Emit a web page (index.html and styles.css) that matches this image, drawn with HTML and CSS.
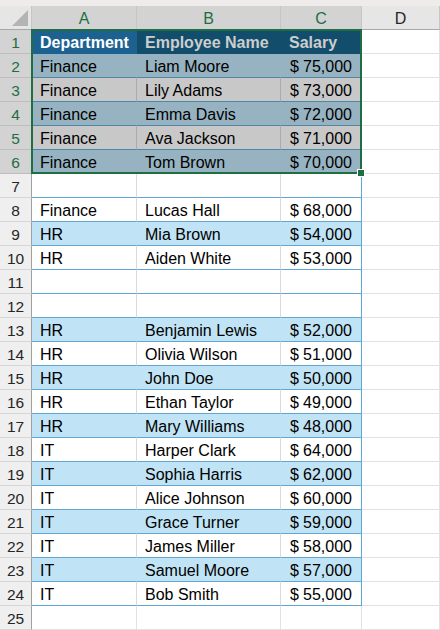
FILE: index.html
```html
<!DOCTYPE html>
<html>
<head>
<meta charset="utf-8">
<link rel="stylesheet" href="styles.css">
</head>
<body>
<div class="topbar"></div>
<div class="sheet">
  <div class="row colhead">
    <div class="corner"><span class="tri"></span></div>
    <div class="on">A</div>
    <div class="on">B</div>
    <div class="on">C</div>
    <div>D</div>
  </div>

  <div class="row s-head">
    <div class="rh on">1</div>
    <div class="h act">Department</div>
    <div class="h">Employee Name</div>
    <div class="h">Salary</div>
    <div class="d"></div>
  </div>
  <div class="row s-blue">
    <div class="rh on">2</div>
    <div class="t">Finance</div><div class="t">Liam Moore</div><div class="t num"><span>$</span><span>75,000</span></div><div class="d"></div>
  </div>
  <div class="row s-gray">
    <div class="rh on">3</div>
    <div class="t">Finance</div><div class="t">Lily Adams</div><div class="t num"><span>$</span><span>73,000</span></div><div class="d"></div>
  </div>
  <div class="row s-blue">
    <div class="rh on">4</div>
    <div class="t">Finance</div><div class="t">Emma Davis</div><div class="t num"><span>$</span><span>72,000</span></div><div class="d"></div>
  </div>
  <div class="row s-gray">
    <div class="rh on">5</div>
    <div class="t">Finance</div><div class="t">Ava Jackson</div><div class="t num"><span>$</span><span>71,000</span></div><div class="d"></div>
  </div>
  <div class="row s-blue">
    <div class="rh on">6</div>
    <div class="t">Finance</div><div class="t">Tom Brown</div><div class="t num"><span>$</span><span>70,000</span></div><div class="d"></div>
  </div>
  <div class="row">
    <div class="rh">7</div>
    <div class="t"></div><div class="t"></div><div class="t last"></div><div class="d"></div>
  </div>
  <div class="row">
    <div class="rh">8</div>
    <div class="t">Finance</div><div class="t">Lucas Hall</div><div class="t last num"><span>$</span><span>68,000</span></div><div class="d"></div>
  </div>
  <div class="row band">
    <div class="rh">9</div>
    <div class="t">HR</div><div class="t">Mia Brown</div><div class="t last num"><span>$</span><span>54,000</span></div><div class="d"></div>
  </div>
  <div class="row">
    <div class="rh">10</div>
    <div class="t">HR</div><div class="t">Aiden White</div><div class="t last num"><span>$</span><span>53,000</span></div><div class="d"></div>
  </div>
  <div class="row">
    <div class="rh">11</div>
    <div class="t"></div><div class="t"></div><div class="t last"></div><div class="d"></div>
  </div>
  <div class="row">
    <div class="rh">12</div>
    <div class="t"></div><div class="t"></div><div class="t last"></div><div class="d"></div>
  </div>
  <div class="row band">
    <div class="rh">13</div>
    <div class="t">HR</div><div class="t">Benjamin Lewis</div><div class="t last num"><span>$</span><span>52,000</span></div><div class="d"></div>
  </div>
  <div class="row">
    <div class="rh">14</div>
    <div class="t">HR</div><div class="t">Olivia Wilson</div><div class="t last num"><span>$</span><span>51,000</span></div><div class="d"></div>
  </div>
  <div class="row band">
    <div class="rh">15</div>
    <div class="t">HR</div><div class="t">John Doe</div><div class="t last num"><span>$</span><span>50,000</span></div><div class="d"></div>
  </div>
  <div class="row">
    <div class="rh">16</div>
    <div class="t">HR</div><div class="t">Ethan Taylor</div><div class="t last num"><span>$</span><span>49,000</span></div><div class="d"></div>
  </div>
  <div class="row band">
    <div class="rh">17</div>
    <div class="t">HR</div><div class="t">Mary Williams</div><div class="t last num"><span>$</span><span>48,000</span></div><div class="d"></div>
  </div>
  <div class="row">
    <div class="rh">18</div>
    <div class="t">IT</div><div class="t">Harper Clark</div><div class="t last num"><span>$</span><span>64,000</span></div><div class="d"></div>
  </div>
  <div class="row band">
    <div class="rh">19</div>
    <div class="t">IT</div><div class="t">Sophia Harris</div><div class="t last num"><span>$</span><span>62,000</span></div><div class="d"></div>
  </div>
  <div class="row">
    <div class="rh">20</div>
    <div class="t">IT</div><div class="t">Alice Johnson</div><div class="t last num"><span>$</span><span>60,000</span></div><div class="d"></div>
  </div>
  <div class="row band">
    <div class="rh">21</div>
    <div class="t">IT</div><div class="t">Grace Turner</div><div class="t last num"><span>$</span><span>59,000</span></div><div class="d"></div>
  </div>
  <div class="row">
    <div class="rh">22</div>
    <div class="t">IT</div><div class="t">James Miller</div><div class="t last num"><span>$</span><span>58,000</span></div><div class="d"></div>
  </div>
  <div class="row band">
    <div class="rh">23</div>
    <div class="t">IT</div><div class="t">Samuel Moore</div><div class="t last num"><span>$</span><span>57,000</span></div><div class="d"></div>
  </div>
  <div class="row">
    <div class="rh">24</div>
    <div class="t">IT</div><div class="t">Bob Smith</div><div class="t last num"><span>$</span><span>55,000</span></div><div class="d"></div>
  </div>
  <div class="row">
    <div class="rh">25</div>
    <div class="d"></div><div class="d"></div><div class="d"></div><div class="d"></div>
  </div>

  <div class="selection"><span class="handle"></span></div>
</div>
</body>
</html>
```
FILE: styles.css
```css
html, body {
  margin: 0;
  padding: 0;
}
body {
  width: 440px;
  height: 630px;
  overflow: hidden;
  background: #ffffff;
  font-family: "Liberation Sans", Arial, sans-serif;
}
.topbar {
  height: 6px;
  background: #efebeb;
}
.sheet {
  position: relative;
}
.row {
  display: grid;
  grid-template-columns: 32px 105px 144px 81px 78px;
  height: 24px;
}
.row > div {
  box-sizing: border-box;
  height: 24px;
  border-right: 1px solid #e1e1e1;
  border-bottom: 1px solid #e1e1e1;
  font-size: 16px;
  line-height: 25px;
  padding: 0 8px;
  white-space: nowrap;
  overflow: hidden;
  color: #000;
}

/* column headers */
.colhead > div {
  background: #e6e6e6;
  text-align: center;
  border-right: 1px solid #c6c6c6;
  border-bottom: 1px solid #a8a8a8;
  color: #262626;
  font-size: 16px;
}
.colhead > div.on {
  background: #d3d3d3;
  color: #1f6e43;
}
.colhead > .corner {
  display: flex;
  align-items: flex-end;
  justify-content: flex-end;
  padding: 0 3px 3px 0;
}
.tri {
  width: 16px;
  height: 16px;
  background: #b4b4b4;
  clip-path: polygon(100% 0, 100% 100%, 0 100%);
}

/* row headers */
.row > .rh {
  background: #efefef;
  text-align: center;
  padding: 0;
  border-right: 1px solid #a0a0a0;
  border-bottom: 1px solid #d5d5d5;
  color: #262626;
  font-size: 15.5px;
}
.row > .rh.on {
  background: #d3d3d3;
  color: #1f6e43;
  border-bottom-color: #bdbdbd;
}

/* table cells */
.row > .t {
  border-bottom-color: #60a7d4;
  border-right-color: #dadada;
  padding-left: 8px;
}
.row > .t.last {
  border-right-color: #60a7d4;
}
.band > .t {
  background: #c0e4f5;
  border-right-color: #c0e4f5;
}
.band > .t.last {
  border-right-color: #60a7d4;
}
.row > .num {
  display: flex;
  justify-content: space-between;
  padding: 0 9px;
}

/* selected block (rows 1-6) */
.s-head > .h {
  background: #134d6c;
  color: #cdcdcd;
  font-weight: bold;
  border-right-color: #134d6c;
  border-bottom-color: #134d6c;
}
.s-head > .h.act {
  background: #1c6190;
  color: #ffffff;
  border-right-color: #1c6190;
  border-bottom-color: #1c6190;
}
.s-blue > .t {
  background: #97b3c1;
  border-right-color: #97b3c1;
  border-bottom-color: #4f87a7;
}
.s-gray > .t {
  background: #c8c8c8;
  border-right-color: #acacac;
  border-bottom-color: #4f87a7;
}

/* selection overlay */
.selection {
  position: absolute;
  left: 31px;
  top: 23px;
  width: 331px;
  height: 145px;
  box-sizing: border-box;
  border: 2px solid #1f6e43;
  pointer-events: none;
}
.handle {
  position: absolute;
  right: -5px;
  bottom: -5px;
  width: 6px;
  height: 6px;
  background: #1f6e43;
  border: 1px solid #ffffff;
}
```
